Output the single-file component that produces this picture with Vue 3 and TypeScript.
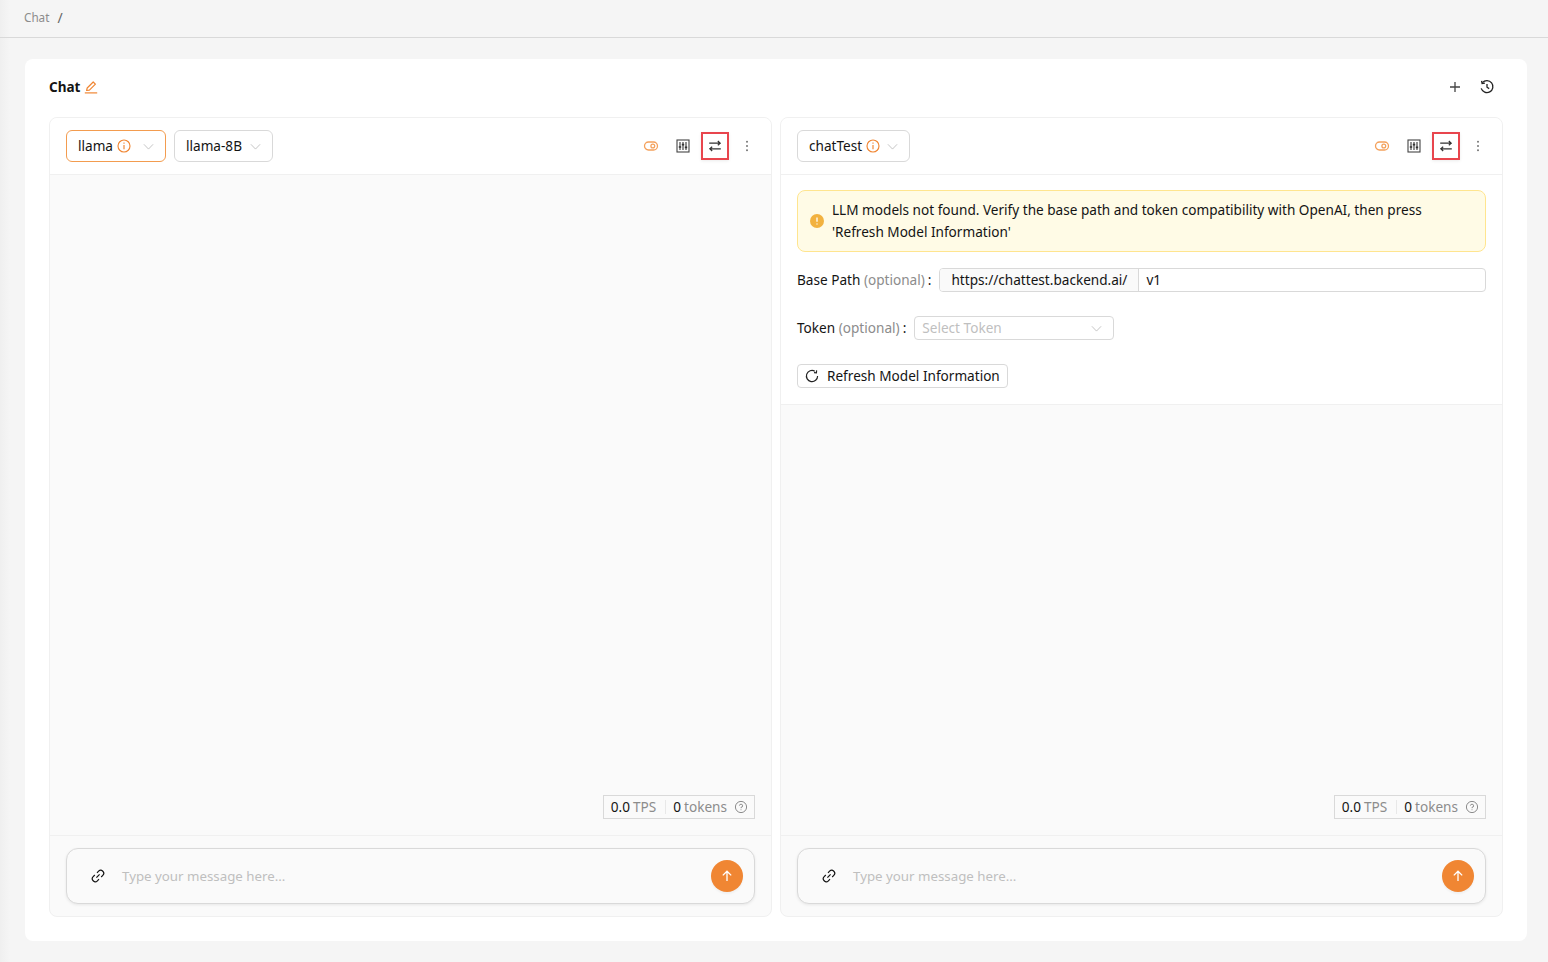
<template>
  <div class="page">
    <header class="topbar">
      <span class="crumb">Chat</span>
      <span class="crumb sep">/</span>
    </header>
    <main class="content">
      <section class="card">
        <div class="card-head">
          <div class="title">
            <span>Chat</span>
            <svg class="edit" viewBox="0 0 14 14" fill="none" stroke="currentColor" stroke-width="1.2">
              <path d="M2.6 10.4 3.2 8 9.2 2 11.4 4.2 5.4 10.2Z" stroke-linejoin="round" />
              <path d="M.8 12.9H13.2" />
            </svg>
          </div>
          <div class="head-actions">
            <svg class="ico" viewBox="0 0 16 16" fill="none" stroke="#444" stroke-width="1.3">
              <path d="M8 3V13M3 8H13" />
            </svg>
            <svg class="ico" viewBox="0 0 16 16" fill="none" stroke="#222" stroke-width="1.3">
              <path d="M3.4 3.6A6 6 0 1 1 2.2 9.4" />
              <path d="M2.6 1.8 3.1 4.6 5.9 4.2" />
              <path d="M8 5V8.2L10.2 9.6" />
            </svg>
          </div>
        </div>
        <div class="panels">
          <article v-for="p in panels" :key="p.id" class="panel">
            <div class="panel-head">
              <div class="selects">
                <div v-for="s in p.selects" :key="s.label" class="select" :class="{ active: s.active }">
                  <span class="lift">{{ s.label }}</span>
                  <svg v-if="s.info" class="info" viewBox="0 0 14 14" fill="none" stroke="currentColor" stroke-width="1.15">
                    <circle cx="7" cy="7" r="6" />
                    <path d="M7 6V10.2" />
                    <path d="M7 3.6V4.8" />
                  </svg>
                  <svg class="chev" viewBox="0 0 12 12" fill="none" stroke="currentColor">
                    <path d="M1 3.6 6 8.8 11 3.6" />
                  </svg>
                </div>
              </div>
              <div class="tools">
                <span class="tool">
                  <svg viewBox="0 0 16 16" fill="none" stroke="#f4a15c" stroke-width="1.3">
                    <rect x="1.5" y="4" width="13" height="8" rx="4" />
                    <circle cx="9.8" cy="8" r="1.9" />
                  </svg>
                </span>
                <span class="tool">
                  <svg viewBox="0 0 16 16" fill="none" stroke="#333" stroke-width="1.1">
                    <rect x="2" y="2" width="12" height="12" stroke="#444" />
                    <path d="M5 4V12M8 4V12M11 4V12" />
                    <path d="M3.8 9H6.2M6.8 6.6H9.2M9.8 9.4H12.2" stroke-width="1.6" />
                  </svg>
                </span>
                <span class="tool outlined">
                  <svg viewBox="0 0 16 16" fill="none" stroke="#333" stroke-width="1.2">
                    <path d="M2.2 5.2H13M10.8 3 13.2 5.2 10.8 7.2" />
                    <path d="M13.8 10.8H3M5.2 8.8 2.8 10.8 5.2 13" />
                  </svg>
                </span>
                <span class="tool">
                  <svg viewBox="0 0 16 16" fill="#777">
                    <circle cx="8" cy="3.8" r="1" />
                    <circle cx="8" cy="8" r="1" />
                    <circle cx="8" cy="12.2" r="1" />
                  </svg>
                </span>
              </div>
            </div>

            <div v-if="p.warn" class="setup">
              <div class="alert">
                <svg class="alert-ico" viewBox="0 0 14 14">
                  <circle cx="7" cy="7" r="7" fill="#f2b240" />
                  <path d="M7 3.4V7.8M7 9.4V10.6" stroke="#fff" stroke-width="1.3" />
                </svg>
                <p>LLM models not found. Verify the base path and token compatibility with OpenAI, then press 'Refresh Model Information'</p>
              </div>
              <div class="field">
                <label class="lift">Base Path <em>(optional)</em><i>:</i></label>
                <div class="addon-input">
                  <span class="addon"><span class="lift">https://chattest.backend.ai/</span></span>
                  <span class="value lift">v1</span>
                </div>
              </div>
              <div class="field">
                <label class="lift">Token <em>(optional)</em><i>:</i></label>
                <div class="token-select">
                  <span class="lift">Select Token</span>
                  <svg class="chev" viewBox="0 0 12 12" fill="none" stroke="currentColor">
                    <path d="M1 3.6 6 8.8 11 3.6" />
                  </svg>
                </div>
              </div>
              <button class="refresh" type="button">
                <svg viewBox="0 0 14 14" fill="none" stroke="#222" stroke-width="1.2">
                  <path d="M12.6 7A5.6 5.6 0 1 1 9.8 2.2" />
                  <path d="M11.6 1.4 11.4 3.8 9 3.6" />
                </svg>
                <span class="lift">Refresh Model Information</span>
              </button>
            </div>

            <div class="messages">
              <div class="stats">
                <b class="lift">0.0</b><span class="muted lift">TPS</span>
                <span class="divider"></span>
                <b class="lift">0</b><span class="muted lift">tokens</span>
                <svg class="help" viewBox="0 0 14 14" fill="none" stroke="#8c8c8c">
                  <circle cx="7" cy="7" r="5.6" />
                  <path d="M5.4 5.6A1.6 1.6 0 1 1 7 7.4V8.2M7 9.4V10.2" />
                </svg>
              </div>
            </div>

            <div class="composer-wrap">
              <div class="composer">
                <svg class="link" viewBox="0 0 14 14" fill="none" stroke="#111" stroke-width="1.2">
                  <path d="M6 3.8 7.6 2.2A2.5 2.5 0 0 1 11.8 6.4L10.2 8" />
                  <path d="M8 10.2 6.4 11.8A2.5 2.5 0 0 1 2.2 7.6L3.8 6" />
                  <path d="M5.4 8.6 8.6 5.4" />
                </svg>
                <span class="placeholder">Type your message here...</span>
                <span class="send">
                  <svg viewBox="0 0 14 14" fill="none" stroke="#fff" stroke-width="1.3">
                    <path d="M7 12V2.4M2.8 6.4 7 2.2 11.2 6.4" />
                  </svg>
                </span>
              </div>
            </div>
          </article>
        </div>
      </section>
    </main>
  </div>
</template>

<script setup lang="ts">
interface ModelSelect {
  label: string
  info: boolean
  active: boolean
}

interface Panel {
  id: number
  warn: boolean
  selects: ModelSelect[]
}

const panels: Panel[] = [
  {
    id: 1,
    warn: false,
    selects: [
      { label: 'llama', info: true, active: true },
      { label: 'llama-8B', info: false, active: false },
    ],
  },
  {
    id: 2,
    warn: true,
    selects: [{ label: 'chatTest', info: true, active: false }],
  },
]
</script>

<style>
html,
body {
  margin: 0;
  background: #f5f5f5;
}
</style>

<style scoped>
.page {
  width: 1548px;
  height: 962px;
  overflow: hidden;
  display: flex;
  flex-direction: column;
  background: linear-gradient(90deg, #efefef 0, #f5f5f5 10px);
  font-family: "Noto Sans", "Open Sans", sans-serif;
  font-size: 13.6px;
  color: #141414;
}

/* Noto sits a little lower than the original font in a centred row */
.lift {
  padding-bottom: 1px;
}

.topbar {
  height: 37px;
  flex: none;
  display: flex;
  align-items: center;
  gap: 8px;
  padding: 0 24px;
  border-bottom: 1px solid #d9d9d9;
  box-sizing: content-box;
}

.crumb {
  font-size: 11.7px;
  color: #8c8c8c;
  padding-bottom: 3px;
}

.crumb.sep {
  font-size: 14px;
  color: #666;
}

.content {
  flex: 1;
  padding: 21px 21px 21px 25px;
  display: flex;
  min-height: 0;
}

.card {
  flex: 1;
  background: #fff;
  border-radius: 8px;
  padding: 0 24px 24px;
  display: flex;
  flex-direction: column;
  min-width: 0;
}

.card-head {
  height: 58px;
  flex: none;
  box-sizing: border-box;
  padding-bottom: 2px;
  display: flex;
  align-items: center;
  justify-content: space-between;
}

.title {
  display: flex;
  align-items: center;
  gap: 4px;
  font-size: 13.5px;
  font-weight: 700;
}

.edit {
  width: 14px;
  height: 14px;
  color: #f08633;
}

.head-actions {
  display: flex;
  gap: 16px;
  padding-right: 8px;
}

.ico {
  width: 16px;
  height: 16px;
}

.panels {
  flex: 1;
  display: grid;
  grid-template-columns: 1fr 1fr;
  gap: 8px;
  min-height: 0;
}

.panel {
  display: flex;
  flex-direction: column;
  border: 1px solid #f0f0f0;
  border-radius: 8px;
  background: #fafafa;
  overflow: hidden;
  min-height: 0;
}

.panel-head {
  height: 56px;
  flex: none;
  display: flex;
  align-items: center;
  justify-content: space-between;
  padding: 0 10px 0 16px;
  background: #fff;
  border-bottom: 1px solid #f0f0f0;
}

.selects {
  display: flex;
  gap: 8px;
}

.select {
  height: 32px;
  box-sizing: border-box;
  display: flex;
  align-items: center;
  padding: 0 11px;
  border: 1px solid #d9d9d9;
  border-radius: 6px;
  background: #fff;
}

.select.active {
  border-color: #f39c4f;
  min-width: 100px;
}

.info {
  width: 14px;
  height: 14px;
  margin: 0 7px 0 4px;
  color: #f08633;
}

.chev {
  width: 11px;
  height: 11px;
  color: #bfbfbf;
  margin-left: auto;
}

.select span + .chev {
  margin-left: 8px;
}

.tools {
  display: flex;
  align-items: center;
  gap: 4px;
}

.tool {
  width: 28px;
  height: 28px;
  display: flex;
  align-items: center;
  justify-content: center;
  box-sizing: border-box;
}

.tool svg {
  width: 16px;
  height: 16px;
}

.tool.outlined {
  border: 2px solid #e8454d;
  box-shadow: 0 1px 3px rgba(0, 0, 0, 0.08);
}

.setup {
  flex: none;
  background: #fff;
  border-bottom: 1px solid #f0f0f0;
  padding: 15px 16px 16px;
  display: flex;
  flex-direction: column;
  align-items: flex-start;
  gap: 16px;
}

.alert {
  align-self: stretch;
  box-sizing: border-box;
  height: 62px;
  display: flex;
  align-items: center;
  gap: 8px;
  padding: 0 12px;
  background: #fffbe6;
  border: 1px solid #ffe58f;
  border-radius: 8px;
}

.alert-ico {
  width: 14px;
  height: 14px;
  flex: none;
}

.alert p {
  margin: 0;
  max-width: 610px;
  line-height: 22px;
}

.field {
  align-self: stretch;
  height: 24px;
  margin-bottom: 8px;
  display: flex;
  align-items: center;
}

.field label {
  white-space: nowrap;
  margin-right: 8px;
}

.field em {
  font-style: normal;
  color: #8c8c8c;
}

.field i {
  font-style: normal;
  margin-left: 3px;
}

.addon-input {
  flex: 1;
  height: 24px;
  box-sizing: border-box;
  display: flex;
  align-items: center;
  border: 1px solid #d9d9d9;
  border-radius: 4px;
  overflow: hidden;
}

.addon {
  height: 100%;
  display: flex;
  align-items: center;
  padding: 0 11px;
  background: #fafafa;
  border-right: 1px solid #d9d9d9;
}

.value {
  padding-left: 7px;
  padding-right: 7px;
}

.token-select {
  width: 200px;
  height: 24px;
  box-sizing: border-box;
  display: flex;
  align-items: center;
  justify-content: space-between;
  padding: 0 11px 0 7px;
  border: 1px solid #d9d9d9;
  border-radius: 4px;
  color: #bfbfbf;
}

.refresh {
  height: 24px;
  display: flex;
  align-items: center;
  gap: 8px;
  padding: 0 7px;
  background: #fff;
  border: 1px solid #d9d9d9;
  border-radius: 4px;
  font: inherit;
  color: inherit;
}

.refresh svg {
  width: 14px;
  height: 14px;
}

.messages {
  flex: 1;
  min-height: 0;
  display: flex;
  align-items: flex-end;
  justify-content: flex-end;
  padding: 0 16px 16px;
}

.stats {
  height: 24px;
  box-sizing: border-box;
  display: flex;
  align-items: center;
  padding: 0 6px 0 7px;
  background: #fafafa;
  border: 1px solid #d9d9d9;
}

.stats b {
  font-weight: 400;
  margin-right: 3px;
}

.muted {
  color: #8c8c8c;
}

.divider {
  width: 1px;
  height: 14px;
  margin: 0 7px 0 9px;
  background: #e8e8e8;
}

.help {
  width: 14px;
  height: 14px;
  margin-left: 7px;
}

.composer-wrap {
  height: 81px;
  flex: none;
  box-sizing: border-box;
  padding: 12px 16px;
  border-top: 1px solid #f0f0f0;
}

.composer {
  height: 56px;
  box-sizing: border-box;
  display: flex;
  align-items: center;
  padding: 0 11px 0 24px;
  background: #fafafa;
  border: 1px solid #d9d9d9;
  border-radius: 12px;
  box-shadow: 0 1px 3px rgba(0, 0, 0, 0.08);
}

.link {
  width: 14px;
  height: 14px;
  flex: none;
}

.placeholder {
  flex: 1;
  margin-left: 17px;
  font-size: 13.3px;
  color: #bfbfbf;
}

.send {
  width: 32px;
  height: 32px;
  border-radius: 50%;
  background: #f08633;
  display: flex;
  align-items: center;
  justify-content: center;
  box-shadow: 0 2px 2px rgba(0, 0, 0, 0.04);
}

.send svg {
  width: 14px;
  height: 14px;
}
</style>
